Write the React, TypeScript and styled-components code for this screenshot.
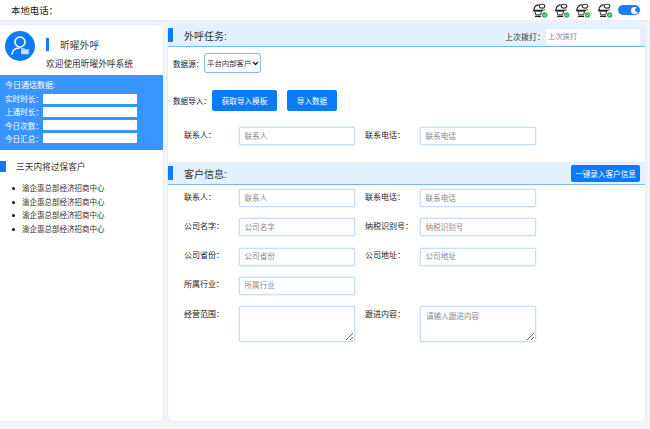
import React from "react";
import styled, { createGlobalStyle } from "styled-components";

const Global = createGlobalStyle`
  html, body { margin: 0; padding: 0; background: #f1f4f9; }
  body { font-family: "Liberation Sans", "Noto Sans CJK SC", sans-serif; color: #333; }
  * { box-sizing: border-box; }
  input::placeholder, textarea::placeholder { color: #8a8a8a; opacity: 1; }
`;

const Page = styled.div`
  width: 650px;
  height: 429px;
  display: flex;
  flex-direction: column;
  overflow: hidden;
`;

const TopBar = styled.header`
  height: 20px;
  flex: none;
  background: #fff;
  display: flex;
  align-items: center;
  justify-content: space-between;
  padding: 0 10px 0 11px;
  font-size: 9.4px;
  color: #222;
  box-shadow: 0 0 2px rgba(180, 200, 225, 0.5);
`;

const PhoneRow = styled.div`
  display: flex;
  align-items: center;
  gap: 5.5px;
`;

const Toggle = styled.span`
  width: 22px;
  height: 10.5px;
  border-radius: 5.25px;
  background: #1b7ff5;
  position: relative;
  &::after {
    content: "";
    position: absolute;
    right: 2px;
    top: 1.75px;
    width: 7px;
    height: 7px;
    border-radius: 50%;
    background: #fff;
  }
  &::before {
    content: "";
    position: absolute;
    z-index: 1;
    right: 1px;
    top: 3.25px;
    width: 4px;
    height: 4px;
    border-radius: 50%;
    background: #1b7ff5;
  }
`;

const Body = styled.div`
  display: flex;
  gap: 5px;
  padding: 4px 5px 8px 0;
  height: 409px;
`;

const Sidebar = styled.aside`
  width: 163px;
  margin-top: 1px;
  background: #fff;
  border-radius: 0 6px 6px 0;
  box-shadow: 0 0 2px #cfe3fb;
  display: flex;
  flex-direction: column;
  overflow: hidden;
`;

const Profile = styled.div`
  height: 50px;
  flex: none;
  display: grid;
  grid-template-columns: 46px 1fr;
  grid-template-rows: 27px 17px;
  padding-top: 6px;
`;

const Avatar = styled.div`
  grid-row: 1 / span 2;
  display: flex;
  align-items: flex-start;
  padding-left: 5px;
`;

const BrandRow = styled.div`
  display: flex;
  align-items: center;
  font-size: 9.8px;
  color: #444;
`;

const BrandBar = styled.span`
  width: 3px;
  height: 13px;
  background: #0f7bff;
  margin-right: 11px;
`;

const Welcome = styled.div`
  grid-column: 2;
  font-size: 8.7px;
  line-height: 11px;
  padding-top: 0.5px;
  white-space: nowrap;
  color: #333;
`;

const Stats = styled.section`
  height: 75px;
  flex: none;
  background: #3894ff;
  color: #fff;
  padding: 5px 5px;
  font-size: 7.6px;
  display: flex;
  flex-direction: column;
`;

const StatTitle = styled.div`
  height: 12px;
  line-height: 12px;
  font-size: 8px;
`;

const StatRow = styled.div`
  height: 13.5px;
  display: flex;
  align-items: center;
  justify-content: space-between;
  width: 132px;
  white-space: nowrap;
`;

const StatValue = styled.span`
  width: 94px;
  height: 10px;
  background: #fff;
`;

const SideTitle = styled.div`
  display: flex;
  align-items: center;
  height: 15px;
  margin-top: 9px;
  font-size: 8.7px;
  color: #333;
`;

const SideMark = styled.span`
  width: 6px;
  height: 11px;
  background: #0f7bff;
  margin-right: 10px;
`;

const CustomerList = styled.ul`
  list-style: none;
  margin: 8px 0 0;
  padding: 0 0 0 12px;
`;

const CustomerItem = styled.li`
  height: 13.5px;
  line-height: 13.5px;
  font-size: 7.5px;
  display: flex;
  align-items: center;
  white-space: nowrap;
  color: #333;
  &::before {
    content: "";
    width: 3px;
    height: 3px;
    border-radius: 50%;
    background: #111;
    margin-right: 7px;
  }
`;

const Main = styled.main`
  flex: 1;
  background: #fff;
  border-radius: 6px;
  box-shadow: 0 0 2px #cfe3fb;
  overflow: hidden;
  display: flex;
  flex-direction: column;
`;

const SectionHead = styled.div`
  height: 23px;
  flex: none;
  background: #e3f0fe;
  border-bottom: 1px solid #78b7fa;
  display: flex;
  align-items: center;
  font-size: 10px;
  color: #333;
  padding-right: 5px;
`;

const SectionMark = styled.span`
  width: 5px;
  height: 13.5px;
  background: #0f7bff;
  margin-right: 11px;
`;

const SectionTitle = styled.span`
  flex: 1;
`;

const LastDial = styled.div`
  display: flex;
  align-items: center;
  font-size: 8px;
  color: #333;
  margin-top: 3px;
`;

const LastValue = styled.span`
  width: 94px;
  height: 16px;
  margin-left: 1px;
  background: #fff;
  color: #888;
  font-size: 7.3px;
  line-height: 16px;
  padding-left: 2px;
`;

const TaskBody = styled.div`
  height: 115px;
  flex: none;
  display: flex;
  flex-direction: column;
`;

const InlineRow = styled.div<{ $top: number }>`
  display: flex;
  align-items: center;
  margin-top: ${(p) => p.$top}px;
  padding-left: 5px;
  font-size: 7.6px;
  color: #222;
`;

const RowLabel = styled.span<{ $w: number }>`
  width: ${(p) => p.$w}px;
  flex: none;
  white-space: nowrap;
`;

const SourceSelect = styled.select`
  appearance: none;
  width: 57px;
  height: 20px;
  border: 1px solid #7cb8fb;
  border-radius: 3px;
  background: #fff url("data:image/svg+xml,%3Csvg xmlns='http://www.w3.org/2000/svg' width='7' height='5'%3E%3Cpath d='M1 1l2.5 2.5L6 1' fill='none' stroke='%23222' stroke-width='1.3'/%3E%3C/svg%3E") no-repeat right 1.5px center;
  font-family: inherit;
  font-size: 7.4px;
  padding: 0 0 0 2px;
  color: #333;
`;

const Action = styled.button<{ $w: number; $gap?: number }>`
  width: ${(p) => p.$w}px;
  height: 20.5px;
  margin-left: ${(p) => p.$gap ?? 0}px;
  border: none;
  border-radius: 2px;
  background: #0a7bfb;
  color: #fff;
  font-family: inherit;
  font-size: 7.6px;
  padding: 0;
`;

const FieldGrid = styled.div<{ $top: number }>`
  display: grid;
  grid-template-columns: 181px 181px;
  row-gap: 11.3px;
  padding-left: 16px;
  margin-top: ${(p) => p.$top}px;
`;

const Field = styled.label`
  display: flex;
  align-items: flex-start;
  font-size: 8px;
  color: #222;
  white-space: nowrap;
`;

const FieldLabel = styled.span`
  width: 55px;
  flex: none;
  line-height: 14px;
  padding-top: 1.5px;
`;

const FieldInput = styled.input`
  width: 116px;
  height: 18px;
  border: 1px solid #c4defb;
  box-shadow: 0 0 0 0.5px #dcebfd;
  border-radius: 1px;
  padding: 0 4.5px;
  font-family: inherit;
  font-size: 7.6px;
  outline: none;
  background: #fff;
`;

const FieldArea = styled.textarea`
  width: 116px;
  height: 36px;
  border: 1px solid #c4defb;
  box-shadow: 0 0 0 0.5px #dcebfd;
  border-radius: 1px;
  padding: 3px 5px;
  font-family: inherit;
  font-size: 7.6px;
  outline: none;
  background: #fff;
  display: block;
`;

const QuickEntry = styled.button`
  width: 69px;
  height: 17px;
  border: none;
  border-radius: 2px;
  background: #0a7bfb;
  color: #fff;
  font-family: inherit;
  font-size: 7.6px;
  padding: 0;
`;

const PhoneIcon = () => (
  <svg width="16" height="15" viewBox="0 0 16 15" fill="none">
    <path d="M2 7C2 4.2 4 2.2 6.8 1.6" stroke="#333" strokeWidth="1.2" />
    <ellipse cx="10" cy="3.2" rx="2.8" ry="1.9" stroke="#333" strokeWidth="1.1" />
    <path d="M11.8 5.6c.4.5.6 1 .6 1.6" stroke="#333" strokeWidth="1" />
    <path d="M1 7.4h10.4" stroke="#222" strokeWidth="1.4" />
    <path d="M2.8 8.2h6.8L8.6 11.8H3.8z" stroke="#333" strokeWidth="1" />
    <path d="M3 13.4h6" stroke="#222" strokeWidth="1.4" />
    <circle cx="12.6" cy="12" r="2.8" fill="#34b45a" />
    <path d="M11.3 12.1l1 .9 1.5-1.7" stroke="#fff" strokeWidth="0.7" />
  </svg>
);

const UserIcon = () => (
  <svg width="30" height="30" viewBox="0 0 30 30">
    <circle cx="15" cy="15" r="15" fill="#0f7bff" />
    <circle cx="15" cy="11" r="5" fill="none" stroke="#fff" strokeWidth="1.6" />
    <path d="M7 23c.6-3.8 3.4-6 7.4-6" fill="none" stroke="#fff" strokeWidth="1.6" strokeLinecap="round" />
    <path d="M16 17h3.2l1 1.2H24v5h-8z" fill="#a9cffc" />
    <path d="M17 20h6M17 21.8h6" stroke="#fff" strokeWidth="0.7" />
  </svg>
);

const taskFields = [
  ["联系人：", "联系人"],
  ["联系电话：", "联系电话"],
];
const customerFields = [
  ["联系人：", "联系人"],
  ["联系电话：", "联系电话"],
  ["公司名字：", "公司名字"],
  ["纳税识别号：", "纳税识别号"],
  ["公司省份：", "公司省份"],
  ["公司地址：", "公司地址"],
];

export default function App() {
  return (
    <Page>
      <Global />
      <TopBar>
        <span>本地电话：</span>
        <PhoneRow>
          <PhoneIcon />
          <PhoneIcon />
          <PhoneIcon />
          <PhoneIcon />
          <Toggle />
        </PhoneRow>
      </TopBar>
      <Body>
        <Sidebar>
          <Profile>
            <Avatar>
              <UserIcon />
            </Avatar>
            <BrandRow>
              <BrandBar />
              昕曜外呼
            </BrandRow>
            <Welcome>欢迎使用昕曜外呼系统</Welcome>
          </Profile>
          <Stats>
            <StatTitle>今日通话数据:</StatTitle>
            {["实时时长：", "上通时长：", "今日次数：", "今日汇总："].map((t) => (
              <StatRow key={t}>
                <span>{t}</span>
                <StatValue />
              </StatRow>
            ))}
          </Stats>
          <SideTitle>
            <SideMark />
            三天内将过保客户
          </SideTitle>
          <CustomerList>
            {[0, 1, 2, 3].map((i) => (
              <CustomerItem key={i}>渝企惠总部经济招商中心</CustomerItem>
            ))}
          </CustomerList>
        </Sidebar>
        <Main>
          <SectionHead>
            <SectionMark />
            <SectionTitle>外呼任务:</SectionTitle>
            <LastDial>
              上次拨打：
              <LastValue>上次拨打</LastValue>
            </LastDial>
          </SectionHead>
          <TaskBody>
            <InlineRow $top={6}>
              <RowLabel $w={31}>数据源：</RowLabel>
              <SourceSelect defaultValue="平台内部客户">
                <option>平台内部客户</option>
              </SourceSelect>
            </InlineRow>
            <InlineRow $top={17}>
              <RowLabel $w={39}>数据导入：</RowLabel>
              <Action $w={65}>获取导入模板</Action>
              <Action $w={50} $gap={10}>导入数据</Action>
            </InlineRow>
            <FieldGrid $top={16.5}>
              {taskFields.map(([l, p]) => (
                <Field key={l}>
                  <FieldLabel>{l}</FieldLabel>
                  <FieldInput placeholder={p} />
                </Field>
              ))}
            </FieldGrid>
          </TaskBody>
          <SectionHead>
            <SectionMark />
            <SectionTitle>客户信息:</SectionTitle>
            <QuickEntry>一键录入客户信息</QuickEntry>
          </SectionHead>
          <FieldGrid $top={4}>
            {customerFields.map(([l, p]) => (
              <Field key={l}>
                <FieldLabel>{l}</FieldLabel>
                <FieldInput placeholder={p} />
              </Field>
            ))}
            <Field>
              <FieldLabel>所属行业：</FieldLabel>
              <FieldInput placeholder="所属行业" />
            </Field>
            <span />
            <Field>
              <FieldLabel>经营范围：</FieldLabel>
              <FieldArea />
            </Field>
            <Field>
              <FieldLabel>跟进内容：</FieldLabel>
              <FieldArea placeholder="请输入跟进内容" />
            </Field>
          </FieldGrid>
        </Main>
      </Body>
    </Page>
  );
}
